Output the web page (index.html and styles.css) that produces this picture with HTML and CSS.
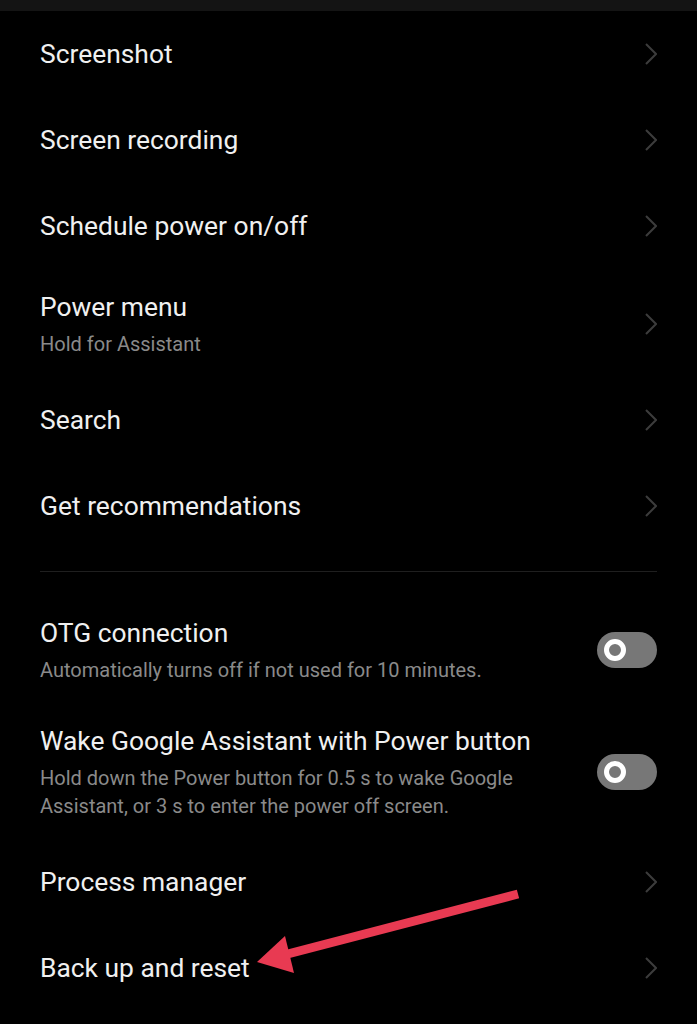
FILE: index.html
```html
<!DOCTYPE html>
<html>
<head>
<meta charset="utf-8">
<link rel="stylesheet" href="styles.css">
</head>
<body>
<div class="page">
  <div class="topbar"></div>
  <div class="list">
    <div class="row"><div class="text"><div class="title">Screenshot</div></div><svg class="chev" viewBox="0 0 12 22"><path d="M1 1 L11 11 L1 21"/></svg></div>
    <div class="row"><div class="text"><div class="title">Screen recording</div></div><svg class="chev" viewBox="0 0 12 22"><path d="M1 1 L11 11 L1 21"/></svg></div>
    <div class="row"><div class="text"><div class="title">Schedule power on/off</div></div><svg class="chev" viewBox="0 0 12 22"><path d="M1 1 L11 11 L1 21"/></svg></div>
    <div class="row two"><div class="text"><div class="title">Power menu</div><div class="sub">Hold for Assistant</div></div><svg class="chev" viewBox="0 0 12 22"><path d="M1 1 L11 11 L1 21"/></svg></div>
    <div class="row"><div class="text"><div class="title">Search</div></div><svg class="chev" viewBox="0 0 12 22"><path d="M1 1 L11 11 L1 21"/></svg></div>
    <div class="row"><div class="text"><div class="title">Get recommendations</div></div><svg class="chev" viewBox="0 0 12 22"><path d="M1 1 L11 11 L1 21"/></svg></div>
  </div>
  <div class="divider"></div>
  <div class="list">
    <div class="row two"><div class="text"><div class="title">OTG connection</div><div class="sub">Automatically turns off if not used for 10 minutes.</div></div><div class="toggle"><span class="knob"></span></div></div>
    <div class="row two"><div class="text"><div class="title">Wake Google Assistant with Power button</div><div class="sub">Hold down the Power button for 0.5 s to wake Google Assistant, or 3 s to enter the power off screen.</div></div><div class="toggle"><span class="knob"></span></div></div>
    <div class="row"><div class="text"><div class="title">Process manager</div></div><svg class="chev" viewBox="0 0 12 22"><path d="M1 1 L11 11 L1 21"/></svg></div>
    <div class="row"><div class="text"><div class="title">Back up and reset</div></div><svg class="chev" viewBox="0 0 12 22"><path d="M1 1 L11 11 L1 21"/></svg></div>
  </div>
  <svg class="arrow" viewBox="0 0 697 1024">
    <line x1="518" y1="894" x2="280" y2="956"/>
    <polygon points="257,962 285,936 294,973"/>
  </svg>
</div>
</body>
</html>
```
FILE: styles.css
```css
* { box-sizing: border-box; }
html, body { margin: 0; padding: 0; background: #000; }
body { font-family: Roboto, "Noto Sans", sans-serif; color: #f0f0f0; }
.page { position: relative; width: 697px; height: 1024px; overflow: hidden; background: #000; }
.topbar { height: 11px; background: #141414; }
.list { display: flex; flex-direction: column; }
.row { display: flex; align-items: center; height: 86px; padding: 0 40px; gap: 36px; }
.row.two { height: auto; padding-top: 20px; padding-bottom: 19px; }
.text { flex: 1; min-width: 0; }
.title { font-size: 26.4px; line-height: 36px; color: #f0f0f0; }
.sub { font-size: 20px; line-height: 28px; color: #8a8a8a; margin-top: 5px; }
.chev { width: 12px; height: 22px; flex: none; }
.chev path { fill: none; stroke: #3c3c3c; stroke-width: 2; }
.divider { height: 1px; background: #1f1f1f; margin: 22px 40px 23px; }
.toggle { flex: none; width: 60px; height: 36px; border-radius: 18px; background: #777; display: flex; align-items: center; padding-left: 7px; }
.knob { width: 22px; height: 22px; border-radius: 50%; border: 5px solid #fff; background: #777; }
.arrow { position: absolute; left: 0; top: 0; width: 697px; height: 1024px; pointer-events: none; }
.arrow line { stroke: #e83a52; stroke-width: 9; }
.arrow polygon { fill: #e83a52; }
```
